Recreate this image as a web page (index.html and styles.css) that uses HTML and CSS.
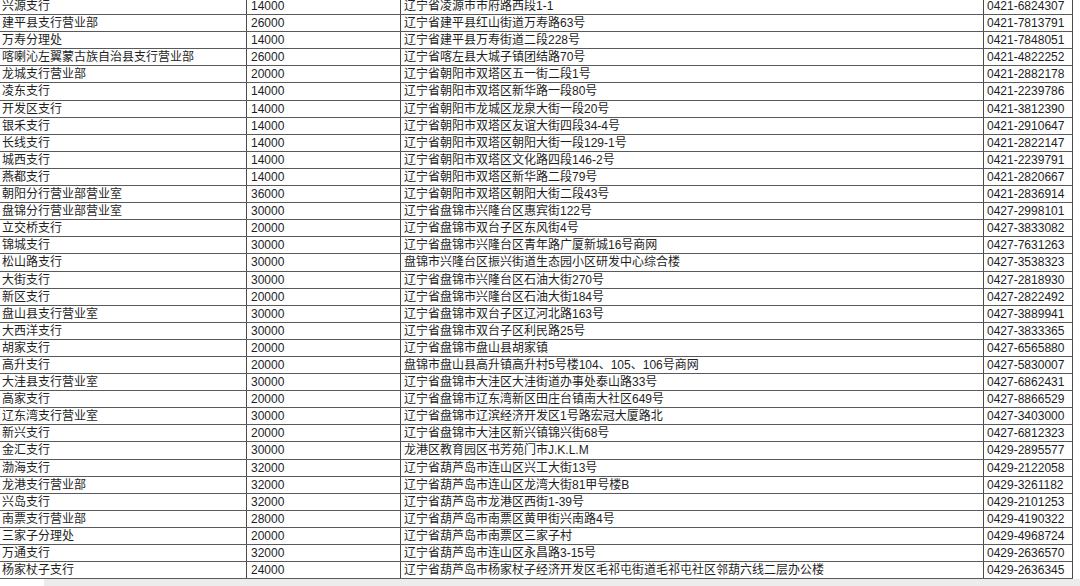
FILE: index.html
```html
<!DOCTYPE html>
<html lang="zh-CN">
<head>
<meta charset="utf-8">
<title>网点列表</title>
<link rel="stylesheet" href="styles.css">
</head>
<body>
<div class="sheet">
  <div class="row"><div class="c name">兴源支行</div><div class="c code">14000</div><div class="c addr">辽宁省凌源市市府路西段1-1</div><div class="c tel">0421-6824307</div></div>
  <div class="row"><div class="c name">建平县支行营业部</div><div class="c code">26000</div><div class="c addr">辽宁省建平县红山街道万寿路63号</div><div class="c tel">0421-7813791</div></div>
  <div class="row"><div class="c name">万寿分理处</div><div class="c code">14000</div><div class="c addr">辽宁省建平县万寿街道二段228号</div><div class="c tel">0421-7848051</div></div>
  <div class="row"><div class="c name">喀喇沁左翼蒙古族自治县支行营业部</div><div class="c code">26000</div><div class="c addr">辽宁省喀左县大城子镇团结路70号</div><div class="c tel">0421-4822252</div></div>
  <div class="row"><div class="c name">龙城支行营业部</div><div class="c code">20000</div><div class="c addr">辽宁省朝阳市双塔区五一街二段1号</div><div class="c tel">0421-2882178</div></div>
  <div class="row"><div class="c name">凌东支行</div><div class="c code">14000</div><div class="c addr">辽宁省朝阳市双塔区新华路一段80号</div><div class="c tel">0421-2239786</div></div>
  <div class="row"><div class="c name">开发区支行</div><div class="c code">14000</div><div class="c addr">辽宁省朝阳市龙城区龙泉大街一段20号</div><div class="c tel">0421-3812390</div></div>
  <div class="row"><div class="c name">银禾支行</div><div class="c code">14000</div><div class="c addr">辽宁省朝阳市双塔区友谊大街四段34-4号</div><div class="c tel">0421-2910647</div></div>
  <div class="row"><div class="c name">长线支行</div><div class="c code">14000</div><div class="c addr">辽宁省朝阳市双塔区朝阳大街一段129-1号</div><div class="c tel">0421-2822147</div></div>
  <div class="row"><div class="c name">城西支行</div><div class="c code">14000</div><div class="c addr">辽宁省朝阳市双塔区文化路四段146-2号</div><div class="c tel">0421-2239791</div></div>
  <div class="row"><div class="c name">燕都支行</div><div class="c code">14000</div><div class="c addr">辽宁省朝阳市双塔区新华路二段79号</div><div class="c tel">0421-2820667</div></div>
  <div class="row"><div class="c name">朝阳分行营业部营业室</div><div class="c code">36000</div><div class="c addr">辽宁省朝阳市双塔区朝阳大街二段43号</div><div class="c tel">0421-2836914</div></div>
  <div class="row"><div class="c name">盘锦分行营业部营业室</div><div class="c code">30000</div><div class="c addr">辽宁省盘锦市兴隆台区惠宾街122号</div><div class="c tel">0427-2998101</div></div>
  <div class="row"><div class="c name">立交桥支行</div><div class="c code">20000</div><div class="c addr">辽宁省盘锦市双台子区东风街4号</div><div class="c tel">0427-3833082</div></div>
  <div class="row"><div class="c name">锦城支行</div><div class="c code">30000</div><div class="c addr">辽宁省盘锦市兴隆台区青年路广厦新城16号商网</div><div class="c tel">0427-7631263</div></div>
  <div class="row"><div class="c name">松山路支行</div><div class="c code">30000</div><div class="c addr">盘锦市兴隆台区振兴街道生态园小区研发中心综合楼</div><div class="c tel">0427-3538323</div></div>
  <div class="row"><div class="c name">大街支行</div><div class="c code">30000</div><div class="c addr">辽宁省盘锦市兴隆台区石油大街270号</div><div class="c tel">0427-2818930</div></div>
  <div class="row"><div class="c name">新区支行</div><div class="c code">20000</div><div class="c addr">辽宁省盘锦市兴隆台区石油大街184号</div><div class="c tel">0427-2822492</div></div>
  <div class="row"><div class="c name">盘山县支行营业室</div><div class="c code">30000</div><div class="c addr">辽宁省盘锦市双台子区辽河北路163号</div><div class="c tel">0427-3889941</div></div>
  <div class="row"><div class="c name">大西洋支行</div><div class="c code">30000</div><div class="c addr">辽宁省盘锦市双台子区利民路25号</div><div class="c tel">0427-3833365</div></div>
  <div class="row"><div class="c name">胡家支行</div><div class="c code">20000</div><div class="c addr">辽宁省盘锦市盘山县胡家镇</div><div class="c tel">0427-6565880</div></div>
  <div class="row"><div class="c name">高升支行</div><div class="c code">20000</div><div class="c addr">盘锦市盘山县高升镇高升村5号楼104、105、106号商网</div><div class="c tel">0427-5830007</div></div>
  <div class="row"><div class="c name">大洼县支行营业室</div><div class="c code">30000</div><div class="c addr">辽宁省盘锦市大洼区大洼街道办事处泰山路33号</div><div class="c tel">0427-6862431</div></div>
  <div class="row"><div class="c name">高家支行</div><div class="c code">20000</div><div class="c addr">辽宁省盘锦市辽东湾新区田庄台镇南大社区649号</div><div class="c tel">0427-8866529</div></div>
  <div class="row"><div class="c name">辽东湾支行营业室</div><div class="c code">30000</div><div class="c addr">辽宁省盘锦市辽滨经济开发区1号路宏冠大厦路北</div><div class="c tel">0427-3403000</div></div>
  <div class="row"><div class="c name">新兴支行</div><div class="c code">20000</div><div class="c addr">辽宁省盘锦市大洼区新兴镇锦兴街68号</div><div class="c tel">0427-6812323</div></div>
  <div class="row"><div class="c name">金汇支行</div><div class="c code">30000</div><div class="c addr">龙港区教育园区书芳苑门市J.K.L.M</div><div class="c tel">0429-2895577</div></div>
  <div class="row"><div class="c name">渤海支行</div><div class="c code">32000</div><div class="c addr">辽宁省葫芦岛市连山区兴工大街13号</div><div class="c tel">0429-2122058</div></div>
  <div class="row"><div class="c name">龙港支行营业部</div><div class="c code">32000</div><div class="c addr">辽宁省葫芦岛市连山区龙湾大街81甲号楼B</div><div class="c tel">0429-3261182</div></div>
  <div class="row"><div class="c name">兴岛支行</div><div class="c code">32000</div><div class="c addr">辽宁省葫芦岛市龙港区西街1-39号</div><div class="c tel">0429-2101253</div></div>
  <div class="row"><div class="c name">南票支行营业部</div><div class="c code">28000</div><div class="c addr">辽宁省葫芦岛市南票区黄甲街兴南路4号</div><div class="c tel">0429-4190322</div></div>
  <div class="row"><div class="c name">三家子分理处</div><div class="c code">20000</div><div class="c addr">辽宁省葫芦岛市南票区三家子村</div><div class="c tel">0429-4968724</div></div>
  <div class="row"><div class="c name">万通支行</div><div class="c code">32000</div><div class="c addr">辽宁省葫芦岛市连山区永昌路3-15号</div><div class="c tel">0429-2636570</div></div>
  <div class="row"><div class="c name">杨家杖子支行</div><div class="c code">24000</div><div class="c addr">辽宁省葫芦岛市杨家杖子经济开发区毛祁屯街道毛祁屯社区邻葫六线二层办公楼</div><div class="c tel">0429-2636345</div></div>
</div>
<div class="foot"></div>
</body>
</html>
```
FILE: styles.css
```css
html, body {
  margin: 0;
  padding: 0;
  background: #ffffff;
  overflow: hidden;
}
body {
  width: 1080px;
  height: 586px;
  font-family: "Liberation Sans", "Noto Sans CJK SC", sans-serif;
  font-size: 12px;
  color: #1e1e1e;
}
.sheet {
  margin-top: -2px;
  width: 1073px;
}
.row {
  display: grid;
  grid-template-columns: 247px 154px 583px 89px;
  height: 17.1px;
  box-sizing: border-box;
  border-bottom: 1px solid #5a5a5a;
}
.c {
  border-right: 1px solid #4a4a4a;
  padding: 1px 0 0 2px;
  line-height: 15px;
  white-space: nowrap;
  overflow: hidden;
}
.code { padding-left: 4px; }
.addr { padding-left: 3px; }
.tel { padding-left: 3px; }
.foot {
  height: 8px;
  background: #ececec;
  margin-left: 44px;
}
```
